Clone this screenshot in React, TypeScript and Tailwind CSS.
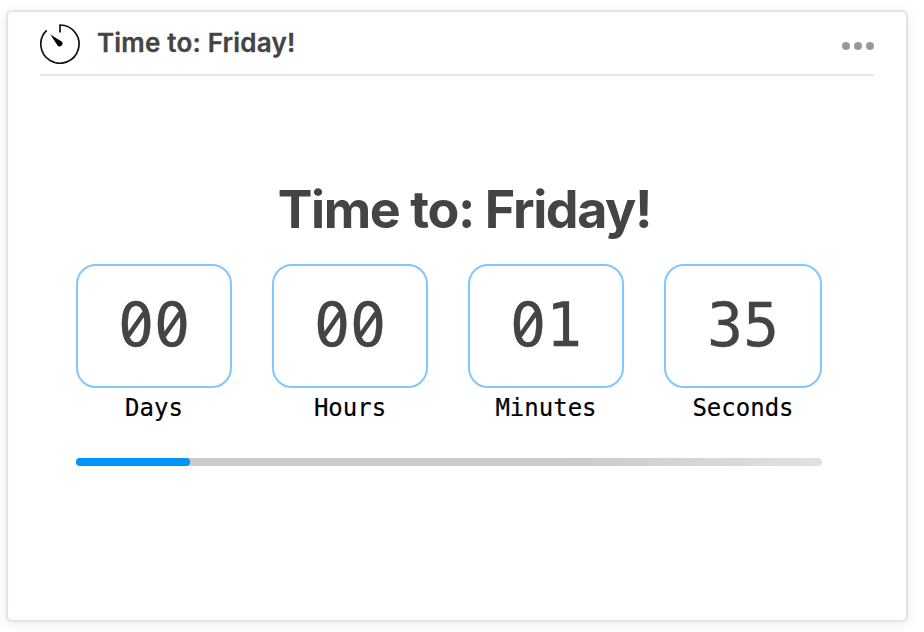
import React from "react";

const units = [
  { value: "00", label: "Days", width: "w-[156px]" },
  { value: "00", label: "Hours", width: "w-[156px]" },
  { value: "01", label: "Minutes", width: "w-[156px]" },
  { value: "35", label: "Seconds", width: "w-[158px]" },
];

function TimerIcon() {
  return (
    <svg width="40" height="40" viewBox="0 0 40 40" fill="none" className="mt-[2px] shrink-0" aria-hidden="true">
      <path d="M20 8.5V1A19.1 19.1 0 1 1 6.7 6.3" stroke="#111" strokeWidth="1.7" />
      <path d="M10.3 10.6L21.6 17.6A2.7 2.7 0 1 1 17.6 21.6Z" fill="#000" />
    </svg>
  );
}

// A zero whose counter is crossed by a diagonal stroke.
function Digit({ char }: { char: string }) {
  return (
    <span className="relative inline-block">
      {char}
      {char === "0" && (
        <svg className="absolute left-0 top-0" width="36" height="60" viewBox="0 0 36 60" aria-hidden="true">
          <ellipse cx="18" cy="30" rx="7" ry="14" fill="#fff" />
          <path d="M10 41L26 18" stroke="#444" strokeWidth="4.6" />
        </svg>
      )}
    </span>
  );
}

export default function App() {
  return (
    <div className="h-[632px] w-[924px] overflow-hidden bg-white pl-[6px] pt-[10px]">
      <main className="flex h-[612px] w-[902px] flex-col rounded-[6px] border-2 border-[#e0e5ed] bg-white px-8 shadow-[0_2px_12px_rgba(40,60,90,0.10)]">
        <header className="flex h-16 shrink-0 items-center border-b-2 border-[#e3e5e9]">
          <TimerIcon />
          <h2 className="ml-[17px] whitespace-nowrap font-['Inter',sans-serif] text-[26px] font-semibold leading-8 tracking-[0.2px] text-[#444] [-webkit-text-stroke:0.3px_#444]">
            Time to: Friday!
          </h2>
          <div className="ml-auto mt-[6px] flex gap-1">
            <i className="size-2 rounded-full bg-[#999]" />
            <i className="size-2 rounded-full bg-[#999]" />
            <i className="size-2 rounded-full bg-[#999]" />
          </div>
        </header>
        <section className="ml-9 mt-[104px] w-[746px]">
          <h1 className="ml-[31px] whitespace-nowrap text-center font-['Inter',sans-serif] text-[52px] font-bold leading-[60px] tracking-[-1.4px] text-[#444]">
            Time to: Friday!
          </h1>
          <div className="mt-6 flex gap-10">
            {units.map((u) => (
              <div key={u.label} className={u.width}>
                <div className="flex h-[124px] items-center justify-center rounded-[20px] border-2 border-[#80c8fc] pb-[2px] font-['DejaVu_Sans_Mono',monospace] text-[60px] leading-[60px] text-[#444] [-webkit-text-stroke:0.3px_#444]">
                  {u.value.split("").map((c, i) => (
                    <Digit key={i} char={c} />
                  ))}
                </div>
                <div className="mt-[6px] text-center font-['DejaVu_Sans_Mono',monospace] text-[24px] leading-7 text-black [-webkit-text-stroke:0.2px_#000]">
                  {u.label}
                </div>
              </div>
            ))}
          </div>
          <div className="mt-[36px] h-2 rounded-full bg-linear-to-r from-[#cacaca] from-65% to-[#e1e1e1]">
            <div className="h-2 w-[114px] rounded-full bg-[#0094fc]" />
          </div>
        </section>
      </main>
    </div>
  );
}
